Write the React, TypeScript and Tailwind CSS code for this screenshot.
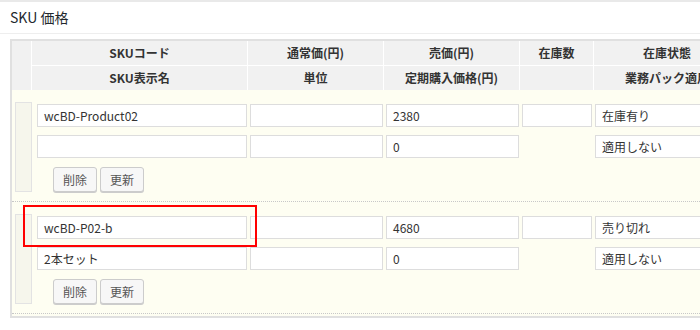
const font = { fontFamily: '"Noto Sans CJK JP", "Noto Sans", sans-serif' };

type Sku = {
  code: string;
  name: string;
  listPrice: string;
  unit: string;
  price: string;
  regularPrice: string;
  stock: string;
  status: string;
  pack: string;
  highlight?: boolean;
};

const skus: Sku[] = [
  {
    code: 'wcBD-Product02',
    name: '',
    listPrice: '',
    unit: '',
    price: '2380',
    regularPrice: '0',
    stock: '',
    status: '在庫有り',
    pack: '適用しない',
  },
  {
    code: 'wcBD-P02-b',
    name: '2本セット',
    listPrice: '',
    unit: '',
    price: '4680',
    regularPrice: '0',
    stock: '',
    status: '売り切れ',
    pack: '適用しない',
    highlight: true,
  },
];

function Field({ value, width }: { value: string; width: string }) {
  return (
    <div
      className={`${width} h-[23px] shrink-0 bg-white border border-[#dddddd] pl-[6px] flex items-center text-[12px] leading-none text-[#333]`}
    >
      {value}
    </div>
  );
}

function Btn({ label }: { label: string }) {
  return (
    <div className="w-[44px] h-[25px] flex items-center justify-center bg-[#f7f7f7] border border-[#cccccc] rounded-[3px] shadow-[0_1px_0_#cccccc] text-[12px] leading-none text-[#555]">
      {label}
    </div>
  );
}

function SkuGroup({ sku }: { sku: Sku }) {
  return (
    <div className="flex pt-[12px] pb-[9px] border-b border-dotted border-[#c8c8c8]">
      <div className="ml-[3px] w-[17px] shrink-0 bg-[#f6f6ec] border border-[#e3e3e3]" />
      <div className="ml-[5px] pt-[2px] flex flex-col">
        <div className="flex gap-[3px]">
          <div className="relative">
            <Field value={sku.code} width="w-[210px]" />
            {sku.highlight && (
              <div className="absolute left-[-14px] top-[-11px] w-[234px] h-[42px] border-2 border-[#ff0000] pointer-events-none" />
            )}
          </div>
          <Field value={sku.listPrice} width="w-[133px]" />
          <Field value={sku.price} width="w-[133px]" />
          <Field value={sku.stock} width="w-[70px]" />
          <Field value={sku.status} width="w-[140px]" />
        </div>
        <div className="flex gap-[3px] mt-[8px]">
          <Field value={sku.name} width="w-[210px]" />
          <Field value={sku.unit} width="w-[133px]" />
          <Field value={sku.regularPrice} width="w-[133px]" />
          <div className="w-[70px] shrink-0" />
          <Field value={sku.pack} width="w-[140px]" />
        </div>
        <div className="flex gap-[3px] mt-[9px] ml-[16px]">
          <Btn label="削除" />
          <Btn label="更新" />
        </div>
      </div>
    </div>
  );
}

export default function App() {
  const th = 'flex items-center justify-center bg-[#f1f1f1] text-[12px] font-bold leading-none text-[#333]';
  return (
    <div className="w-[700px] h-[330px] overflow-hidden bg-white" style={font}>
      <div className="h-[2px] bg-[#e9e9e9]" />
      <div className="h-[32px] px-[10px] flex items-center border-b border-[#eeeeee] text-[14px] text-[#23282d]">
        SKU 価格
      </div>

      <div className="ml-[10px] mt-[5px] w-[740px] border-2 border-[#e0e0e0]">
        {/* header */}
        <div className="grid grid-cols-[19px_215px_135px_135px_73px_160px] grid-rows-[24px_24px] gap-px bg-white">
          <div className="row-span-2 bg-[#f1f1f1]" />
          <div className={th}>SKUコード</div>
          <div className={th}>通常価(円)</div>
          <div className={th}>売価(円)</div>
          <div className={th}>在庫数</div>
          <div className={`${th} justify-start pl-[49px]`}>在庫状態</div>
          <div className={th}>SKU表示名</div>
          <div className={th}>単位</div>
          <div className={th}>定期購入価格(円)</div>
          <div className="bg-[#f1f1f1]" />
          <div className={`${th} justify-start pl-[31px] whitespace-nowrap`}>業務パック適用</div>
        </div>

        {/* rows */}
        <div className="bg-[#fefef2] pb-[2px]">
          {skus.map((s) => (
            <SkuGroup key={s.code} sku={s} />
          ))}
        </div>
      </div>
    </div>
  );
}
